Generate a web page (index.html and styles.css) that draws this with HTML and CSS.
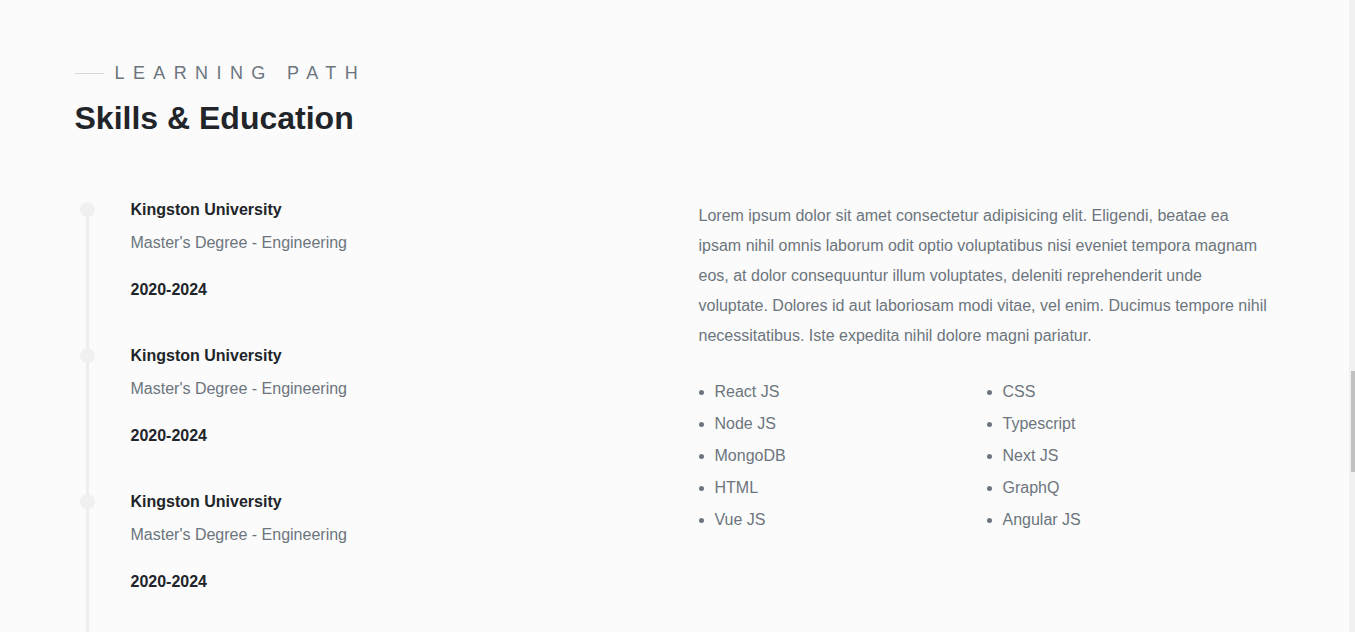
FILE: index.html
```html
<!DOCTYPE html>
<html lang="en">
<head>
<meta charset="utf-8">
<title>Skills &amp; Education</title>
<link rel="stylesheet" href="styles.css">
</head>
<body>
<div class="page">
  <main class="main">
    <section class="section">
      <div class="container">
        <header class="head">
          <div class="eyebrow"><span class="eyebrow-line"></span><span class="eyebrow-text">Learning Path</span></div>
          <h2 class="title">Skills &amp; Education</h2>
        </header>
        <div class="grid">
          <ul class="timeline">
            <li class="tl-item">
              <h5 class="tl-title">Kingston University</h5>
              <p class="tl-sub">Master's Degree - Engineering</p>
              <p class="tl-year">2020-2024</p>
            </li>
            <li class="tl-item">
              <h5 class="tl-title">Kingston University</h5>
              <p class="tl-sub">Master's Degree - Engineering</p>
              <p class="tl-year">2020-2024</p>
            </li>
            <li class="tl-item">
              <h5 class="tl-title">Kingston University</h5>
              <p class="tl-sub">Master's Degree - Engineering</p>
              <p class="tl-year">2020-2024</p>
            </li>
          </ul>
          <div class="about">
            <p class="about-text">Lorem ipsum dolor sit amet consectetur adipisicing elit. Eligendi, beatae ea ipsam nihil omnis laborum odit optio voluptatibus nisi eveniet tempora magnam eos, at dolor consequuntur illum voluptates, deleniti reprehenderit unde voluptate. Dolores id aut laboriosam modi vitae, vel enim. Ducimus tempore nihil necessitatibus. Iste expedita nihil dolore magni pariatur.</p>
            <ul class="skills">
              <li>React JS</li>
              <li>CSS</li>
              <li>Node JS</li>
              <li>Typescript</li>
              <li>MongoDB</li>
              <li>Next JS</li>
              <li>HTML</li>
              <li>GraphQ</li>
              <li>Vue JS</li>
              <li>Angular JS</li>
            </ul>
          </div>
        </div>
      </div>
    </section>
  </main>
  <div class="scrollbar"><div class="thumb"></div></div>
</div>
</body>
</html>
```

FILE: styles.css
```css
* { box-sizing: border-box; }
html, body { margin: 0; padding: 0; height: 100%; }
body {
  background: #fbfbfb;
  font-family: "Liberation Sans", Arial, sans-serif;
  color: #212529;
  overflow: hidden;
}
.page {
  display: flex;
  height: 100vh;
  overflow: hidden;
}
.main {
  flex: 1;
  min-width: 0;
  height: 100%;
  overflow: hidden;
}
.scrollbar {
  width: 6px;
  background: #f1f1f1;
  padding-left: 2px;
  height: 100%;
}
.thumb {
  margin-top: 371px;
  height: 101px;
  background: #c1c1c1;
}
.section {
  padding-top: 60px;
}
.container {
  width: 1200px;
  margin: 0 auto;
}
.eyebrow {
  display: flex;
  align-items: center;
  gap: 11px;
  height: 27px;
}
.eyebrow-line {
  width: 29px;
  height: 1px;
  background: #d6d6d6;
}
.eyebrow-text {
  font-size: 18px;
  line-height: 27px;
  text-transform: uppercase;
  letter-spacing: 8.4px;
  color: #6c757d;
}
.title {
  margin: 12px 0 0;
  font-size: 32px;
  line-height: 38px;
  font-weight: 700;
  color: #212529;
}
.grid {
  display: grid;
  grid-template-columns: 600px 600px;
  margin-top: 61px;
}
.timeline {
  list-style: none;
  margin: 0;
  padding: 0 0 0 56px;
  position: relative;
}
.timeline::before {
  content: "";
  position: absolute;
  left: 11px;
  top: 8px;
  bottom: 0;
  width: 3px;
  background: #eeeeee;
}
.tl-item {
  position: relative;
  padding-bottom: 42px;
}
.tl-item::before {
  content: "";
  position: absolute;
  left: -51px;
  top: 4px;
  width: 15px;
  height: 15px;
  border-radius: 50%;
  background: #f0f0f0;
}
.tl-title {
  margin: 0 0 9px;
  font-size: 16px;
  line-height: 24px;
  font-weight: 700;
  color: #212529;
}
.tl-sub {
  margin: 0 0 23px;
  font-size: 16px;
  line-height: 24px;
  color: #6c757d;
}
.tl-year {
  margin: 0;
  font-size: 16px;
  line-height: 24px;
  font-weight: 700;
  color: #212529;
}
.about {
  padding-left: 24px;
  padding-top: 3px;
}
.about-text {
  margin: 0;
  font-size: 16px;
  line-height: 30px;
  color: #6c757d;
}
.skills {
  margin: 29px 0 0;
  padding: 0 0 0 16px;
  display: grid;
  grid-template-columns: 288px 288px;
  row-gap: 8px;
  font-size: 16px;
  line-height: 24px;
  color: #6c757d;
}
```
